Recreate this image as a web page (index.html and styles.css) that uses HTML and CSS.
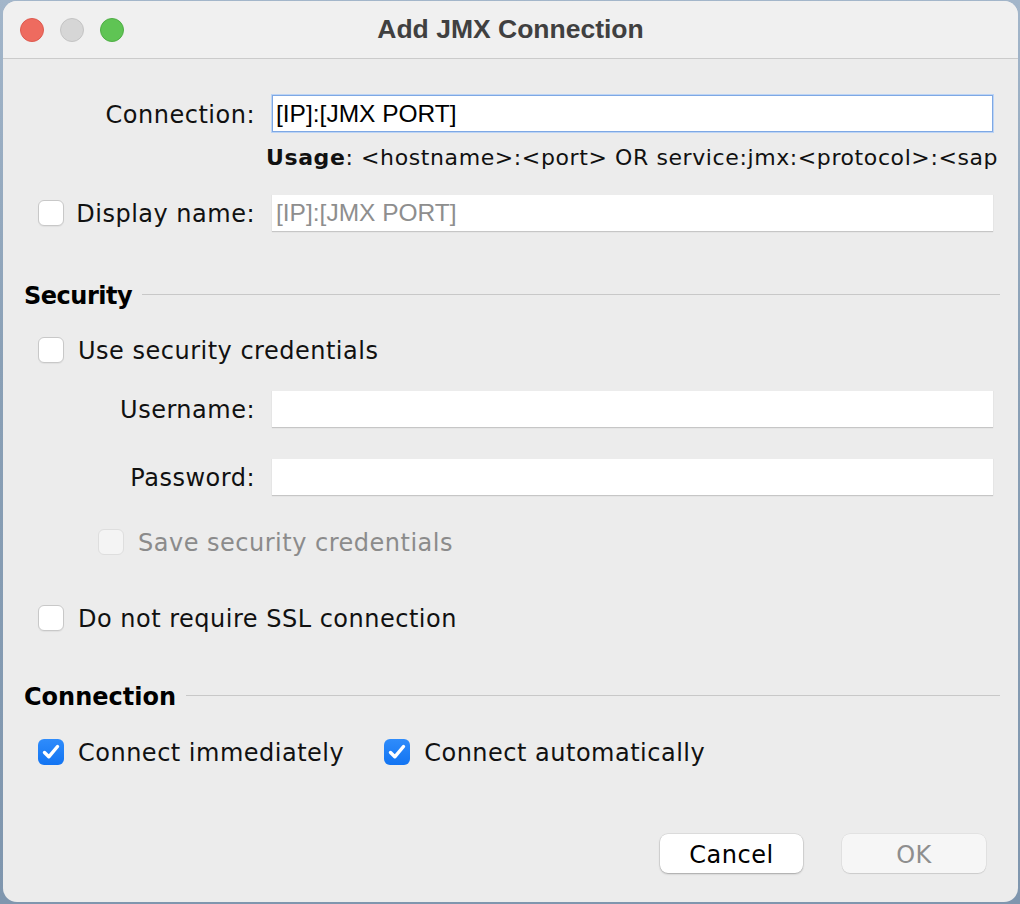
FILE: index.html
```html
<!DOCTYPE html>
<html lang="en">
<head>
  <meta charset="UTF-8" />
  <title>Add JMX Connection</title>
  <link rel="stylesheet" href="styles.css">
</head>
<body>
  <div class="window">
    <div class="titlebar">
      <div class="lights">
        <span class="light red"></span>
        <span class="light gray"></span>
        <span class="light green"></span>
      </div>
      <div class="title">Add JMX Connection</div>
    </div>

    <div class="content">
      <div class="row">
        <div class="label">Connection:</div>
        <div class="field focused">[IP]:[JMX PORT]</div>
      </div>
      <div class="row usage-row">
        <div></div>
        <div class="usage"><b>Usage</b>: &lt;hostname&gt;:&lt;port&gt; OR service:jmx:&lt;protocol&gt;:&lt;sap</div>
      </div>
      <div class="row display-row">
        <div class="label with-box">
          <span class="box"></span>
          <span>Display name:</span>
        </div>
        <div class="field placeholder">[IP]:[JMX PORT]</div>
      </div>

      <div class="section sec-security">
        <span class="section-title">Security</span>
        <span class="section-line"></span>
      </div>
      <div class="check cred-row">
        <span class="box"></span>
        <span>Use security credentials</span>
      </div>
      <div class="row user-row">
        <div class="label">Username:</div>
        <div class="field"></div>
      </div>
      <div class="row pass-row">
        <div class="label">Password:</div>
        <div class="field"></div>
      </div>
      <div class="check save-row disabled">
        <span class="box"></span>
        <span>Save security credentials</span>
      </div>
      <div class="check ssl-row">
        <span class="box"></span>
        <span>Do not require SSL connection</span>
      </div>

      <div class="section sec-connection">
        <span class="section-title">Connection</span>
        <span class="section-line"></span>
      </div>
      <div class="connect-row">
        <div class="check">
          <span class="box checked">
            <svg viewBox="0 0 26 26" width="26" height="26"><path d="M6.5 13.5 L10.8 17.8 L19.5 7.5" fill="none" stroke="#fff" stroke-width="3.4" stroke-linecap="round" stroke-linejoin="round"/></svg>
          </span>
          <span>Connect immediately</span>
        </div>
        <div class="check">
          <span class="box checked">
            <svg viewBox="0 0 26 26" width="26" height="26"><path d="M6.5 13.5 L10.8 17.8 L19.5 7.5" fill="none" stroke="#fff" stroke-width="3.4" stroke-linecap="round" stroke-linejoin="round"/></svg>
          </span>
          <span>Connect automatically</span>
        </div>
      </div>

      <div class="buttons">
        <button class="btn cancel">Cancel</button>
        <button class="btn ok" disabled>OK</button>
      </div>
    </div>
  </div>
</body>
</html>
```

FILE: styles.css
```css
html, body {
  margin: 0;
  padding: 0;
}

body {
  width: 1020px;
  height: 904px;
  background: linear-gradient(180deg, #a3b6ca 0%, #8aa0b6 40%, #7f96ae 100%);
  font-family: "DejaVu Sans", sans-serif;
  font-size: 24px;
  letter-spacing: 0.5px;
  color: #111;
  overflow: hidden;
}

.window {
  margin: 1px 2px 0 3px;
  height: 901px;
  border-radius: 14px;
  background: #ececec;
  overflow: hidden;
}

.titlebar {
  height: 57px;
  border-bottom: 1px solid #cbcbcb;
  background: #f0f0f0;
  display: grid;
  grid-template-columns: 1fr auto 1fr;
  align-items: center;
}

.lights {
  display: flex;
  gap: 16px;
  padding-left: 17px;
  padding-top: 1px;
}

.light {
  width: 24px;
  height: 24px;
  border-radius: 50%;
  box-sizing: border-box;
}

.light.red {
  background: #ee6b5f;
  border: 1px solid #de5a4f;
}

.light.gray {
  background: #d6d6d6;
  border: 1px solid #c4c4c4;
}

.light.green {
  background: #5fc454;
  border: 1px solid #4fae45;
}

.title {
  font-family: "Liberation Sans", Arial, sans-serif;
  font-weight: bold;
  font-size: 26.5px;
  letter-spacing: 0;
  color: #404040;
}

.content {
  padding: 36px 18px 0 21px;
}

.row {
  display: grid;
  grid-template-columns: 231px 1fr;
  column-gap: 17px;
  align-items: center;
}

.label {
  text-align: right;
  white-space: nowrap;
  padding-top: 2px;
}

.label.with-box {
  display: flex;
  justify-content: space-between;
  align-items: center;
  padding-left: 14px;
  padding-top: 0;
}

.label.with-box span:last-child {
  padding-top: 2px;
}

.field {
  height: 37px;
  margin-right: 7px;
  box-sizing: border-box;
  background: #fff;
  border-top: 1px solid #ececec;
  box-shadow: 0 1px 1px rgba(0, 0, 0, 0.16);
  padding-left: 4px;
  font-family: "Liberation Sans", Arial, sans-serif;
  font-size: 24.5px;
  letter-spacing: 0;
  line-height: 36px;
  color: #000;
  white-space: nowrap;
}

.field.focused {
  border: 1px solid #7ea8e4;
  box-shadow: 0 0 0 1px #bcd4f5;
  padding-left: 3px;
}

.field.placeholder {
  color: #8e8e8e;
}

.usage-row {
  margin-top: 13px;
  height: 24px;
}

.usage {
  margin-left: -6px;
  font-size: 22px;
  letter-spacing: 0.6px;
  line-height: 26px;
  white-space: nowrap;
}

.display-row {
  margin-top: 25px;
}

.section {
  display: flex;
  align-items: center;
  height: 30px;
  gap: 10px;
}

.section-title {
  font-weight: bold;
  letter-spacing: 0;
  color: #000;
  padding-top: 2px;
}

.sec-security .section-title {
  letter-spacing: -0.5px;
}

.section-line {
  flex: 1;
  height: 1px;
  background: #c8c8c8;
  margin-top: -1px;
}

.sec-security {
  margin-top: 49px;
}

.sec-connection {
  margin-top: 50px;
}

.check {
  display: flex;
  align-items: center;
  gap: 14px;
  height: 26px;
  padding-left: 14px;
  white-space: nowrap;
}

.check span:last-child {
  padding-top: 2px;
}

.box {
  width: 26px;
  height: 26px;
  flex: none;
  box-sizing: border-box;
  border: 1px solid #c8c8c8;
  border-radius: 6px;
  background: #fff;
  box-shadow: 0 1px 1px rgba(0, 0, 0, 0.05);
}

.box.checked {
  border: none;
  background: linear-gradient(180deg, #2f8cfb 0%, #1274f2 100%);
  box-shadow: none;
}

.box svg {
  display: block;
}

.disabled {
  color: #8b8b8b;
}

.disabled .box {
  background: #f4f4f4;
  border-color: #dedede;
  box-shadow: none;
}

.cred-row {
  margin-top: 27px;
}

.user-row {
  margin-top: 27px;
}

.pass-row {
  margin-top: 31px;
}

.save-row {
  margin-top: 34px;
  padding-left: 74px;
}

.ssl-row {
  margin-top: 50px;
}

.connect-row {
  display: flex;
  gap: 26px;
  margin-top: 28px;
}

.buttons {
  display: flex;
  justify-content: flex-end;
  gap: 39px;
  margin-top: 69px;
  margin-right: 14px;
}

.btn {
  height: 39px;
  box-sizing: border-box;
  border: none;
  border-radius: 8px;
  font-family: "DejaVu Sans", sans-serif;
  font-size: 24px;
  letter-spacing: 0.5px;
  padding: 2px 0 0;
}

.btn.cancel {
  width: 143px;
  background: #fff;
  color: #000;
  box-shadow: 0 0 0 0.5px rgba(0, 0, 0, 0.12), 0 1px 2px rgba(0, 0, 0, 0.25);
}

.btn.ok {
  width: 144px;
  background: #f6f6f6;
  color: #8e8e8e;
  box-shadow: 0 0 0 0.5px rgba(0, 0, 0, 0.08), 0 1px 1px rgba(0, 0, 0, 0.1);
}
```
